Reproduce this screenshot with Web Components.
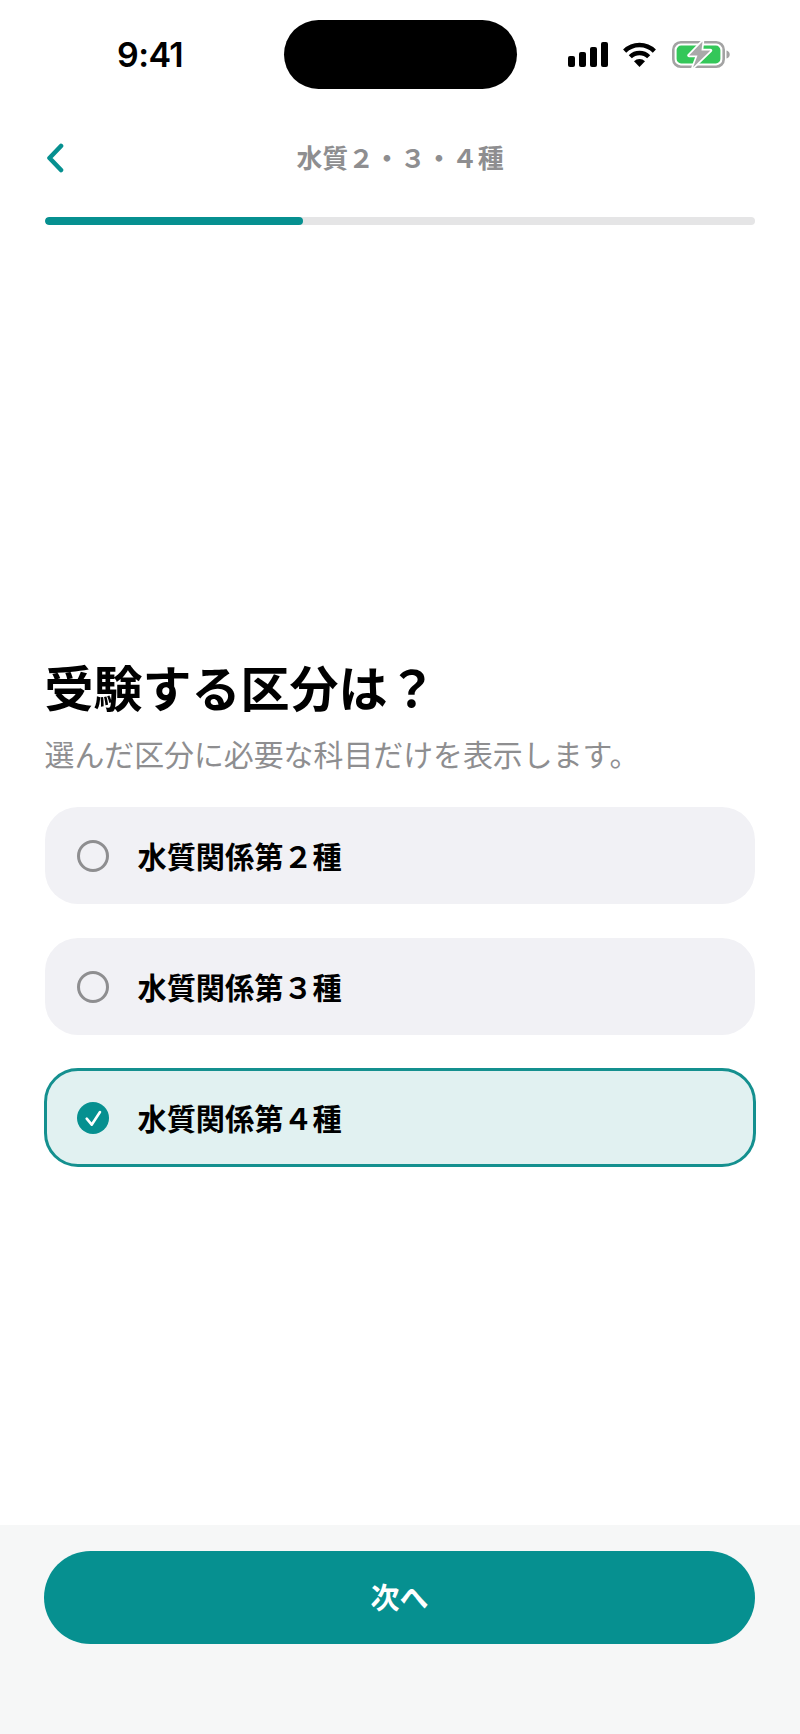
<!DOCTYPE html>
<html lang="ja">
<head>
<meta charset="utf-8">
<title>受験する区分は？</title>
<style>
html,body{margin:0;padding:0;background:#fff;}
body{font-family:"Noto Sans CJK JP","Noto Sans",sans-serif;}
</style>
</head>
<body>
<template id="t-screen">
<style>
:host{display:flex;flex-direction:column;width:800px;height:1734px;background:#fff;overflow:hidden;--teal:#069090;--gray:#8e8e90;font-family:"Noto Sans CJK JP","Noto Sans",sans-serif;color:#000;}
.main{flex:1;display:flex;flex-direction:column;padding:431px 45px 0 44.5px;min-height:0;}
</style>
<slot name="top"></slot>
<div class="main"><slot></slot></div>
<slot name="bottom"></slot>
</template>

<template id="t-status">
<style>
:host{display:grid;grid-template-columns:1fr 233px 1fr;height:69px;padding-top:20px;box-sizing:content-box;align-items:center;}
.time{font:600 34px/1 Inter,"Liberation Sans",sans-serif;letter-spacing:-.6px;padding-left:117px;}
.island{height:69px;background:#000;border-radius:34.5px;}
.icons{display:flex;align-items:center;padding-left:51px;margin-top:-1px;}
svg{display:block;}
.sig{margin-right:14px;}.wifi{margin-right:15px;}
</style>
<div class="time">9:41</div>
<div class="island"></div>
<div class="icons">
<svg class="sig" width="40" height="25" viewBox="0 0 40 25" fill="#000"><rect x="0" y="14" width="7" height="11" rx="2"/><rect x="11" y="10" width="7" height="15" rx="2"/><rect x="22" y="5" width="7" height="20" rx="2"/><rect x="33" y="0" width="7" height="25" rx="2"/></svg>
<svg class="wifi" width="35" height="25" viewBox="0 0 35 25" fill="none" stroke="#000" stroke-width="4.4"><path d="M2.65 9.15A21 21 0 0 1 32.35 9.15"/><path d="M8.3 14.8A13 13 0 0 1 26.7 14.8"/><path d="M17.5 25L12 19.3A7.8 7.8 0 0 1 23 19.3Z" fill="#000" stroke="none"/></svg>
<svg class="bat" width="58" height="27" viewBox="0 0 58 27"><rect x="1.3" y="1.3" width="50.4" height="24.4" rx="7.5" fill="none" stroke="#a3a3a3" stroke-width="2.6"/><rect x="4.6" y="4.6" width="43.8" height="17.8" rx="4.5" fill="#34c759"/><path d="M54.5 9.5c2 .5 3.2 2 3.2 4s-1.2 3.5-3.2 4z" fill="#a3a3a3"/><path d="M30.5 0.5L17 14.5H25.5L21 26.5L38.5 9.5H29.5Z" fill="#a9a9a9" stroke="#fff" stroke-width="3.4" stroke-linejoin="round" paint-order="stroke"/></svg>
</div>
</template>

<template id="t-nav">
<style>
:host{display:flex;align-items:center;justify-content:center;position:relative;height:69px;margin-top:35px;padding:0 44px;}
button{position:absolute;left:44px;top:50%;transform:translateY(-50%);margin-top:-1px;background:none;border:0;padding:0;display:block;line-height:0;}
.t{font-weight:700;font-size:25.9px;line-height:1;color:var(--gray);margin-top:-3px;}
</style>
<button aria-label="戻る"><svg width="22" height="30" viewBox="0 0 22 30" fill="none" stroke="#069090" stroke-width="4.6" stroke-linecap="round" stroke-linejoin="round"><path d="M17 3L5.5 15L17 27"/></svg></button>
<div class="t"><slot></slot></div>
</template>

<template id="t-progress">
<style>
:host{display:block;height:8px;margin:24px 45px 0 44.5px;background:#e5e5e6;border-radius:4px;overflow:hidden;}
.f{height:100%;width:var(--v);background:var(--teal);border-radius:4px;}
</style>
<div class="f"></div>
</template>

<template id="t-head">
<style>
:host{display:block;margin-bottom:34px;}
h1{margin:0;font-weight:700;font-size:49px;line-height:60px;color:#000;}
p{margin:17px 0 0;font-weight:400;font-size:29.9px;line-height:40px;color:var(--gray);white-space:nowrap;}
</style>
<h1><slot name="title"></slot></h1>
<p><slot name="sub"></slot></p>
</template>

<template id="t-list">
<style>:host{display:flex;flex-direction:column;gap:34px;}</style>
<slot></slot>
</template>

<template id="t-option">
<style>
:host{display:flex;align-items:center;gap:28.5px;height:97px;padding:0 32.5px;border-radius:33px;background:#f1f1f5;box-sizing:border-box;}
:host([selected]){background:#e1f1f1;border:3px solid #14908f;height:99px;margin:-1px -1px;padding:0 30.5px;border-radius:34px;}
.dot{width:32px;height:32px;box-sizing:border-box;border:3px solid var(--gray);border-radius:50%;flex:none;}
:host([selected]) .dot{background:var(--teal);border:0;}
svg{display:none;}
:host([selected]) svg{display:block;}
.l{font-weight:700;font-size:29.2px;line-height:1;color:#000;}
</style>
<span class="dot"><svg width="32" height="32" viewBox="0 0 32 32" fill="none" stroke="#fff" stroke-width="2.6" stroke-linecap="round" stroke-linejoin="round"><path d="M9.7 16.7L14.7 22.7L23 10"/></svg></span>
<span class="l"><slot></slot></span>
</template>

<template id="t-footer">
<style>
:host{display:block;height:209px;box-sizing:border-box;padding:26px 44px 0;background:#f6f7f7;}
</style>
<slot></slot>
</template>

<template id="t-button">
<style>
:host{display:flex;align-items:center;justify-content:center;width:711px;height:93px;box-sizing:border-box;padding-bottom:2px;border-radius:46.5px;background:var(--teal);color:#fff;font-weight:700;font-size:29px;line-height:1;}
</style>
<slot></slot>
</template>

<x-screen>
  <x-status slot="top"></x-status>
  <x-nav slot="top">水質２・３・４種</x-nav>
  <x-progress slot="top" style="--v:36.4%"></x-progress>
  <x-head>
    <span slot="title">受験する区分は？</span>
    <span slot="sub">選んだ区分に必要な科目だけを表示します。</span>
  </x-head>
  <x-list>
    <x-option>水質関係第２種</x-option>
    <x-option>水質関係第３種</x-option>
    <x-option selected>水質関係第４種</x-option>
  </x-list>
  <x-footer slot="bottom"><x-button>次へ</x-button></x-footer>
</x-screen>

<script>
const map={'x-screen':'t-screen','x-status':'t-status','x-nav':'t-nav','x-progress':'t-progress','x-head':'t-head','x-list':'t-list','x-option':'t-option','x-footer':'t-footer','x-button':'t-button'};
for(const [tag,id] of Object.entries(map)){
  customElements.define(tag,class extends HTMLElement{
    constructor(){super();this.attachShadow({mode:'open'}).appendChild(document.getElementById(id).content.cloneNode(true));}
  });
}
</script>
</body>
</html>
